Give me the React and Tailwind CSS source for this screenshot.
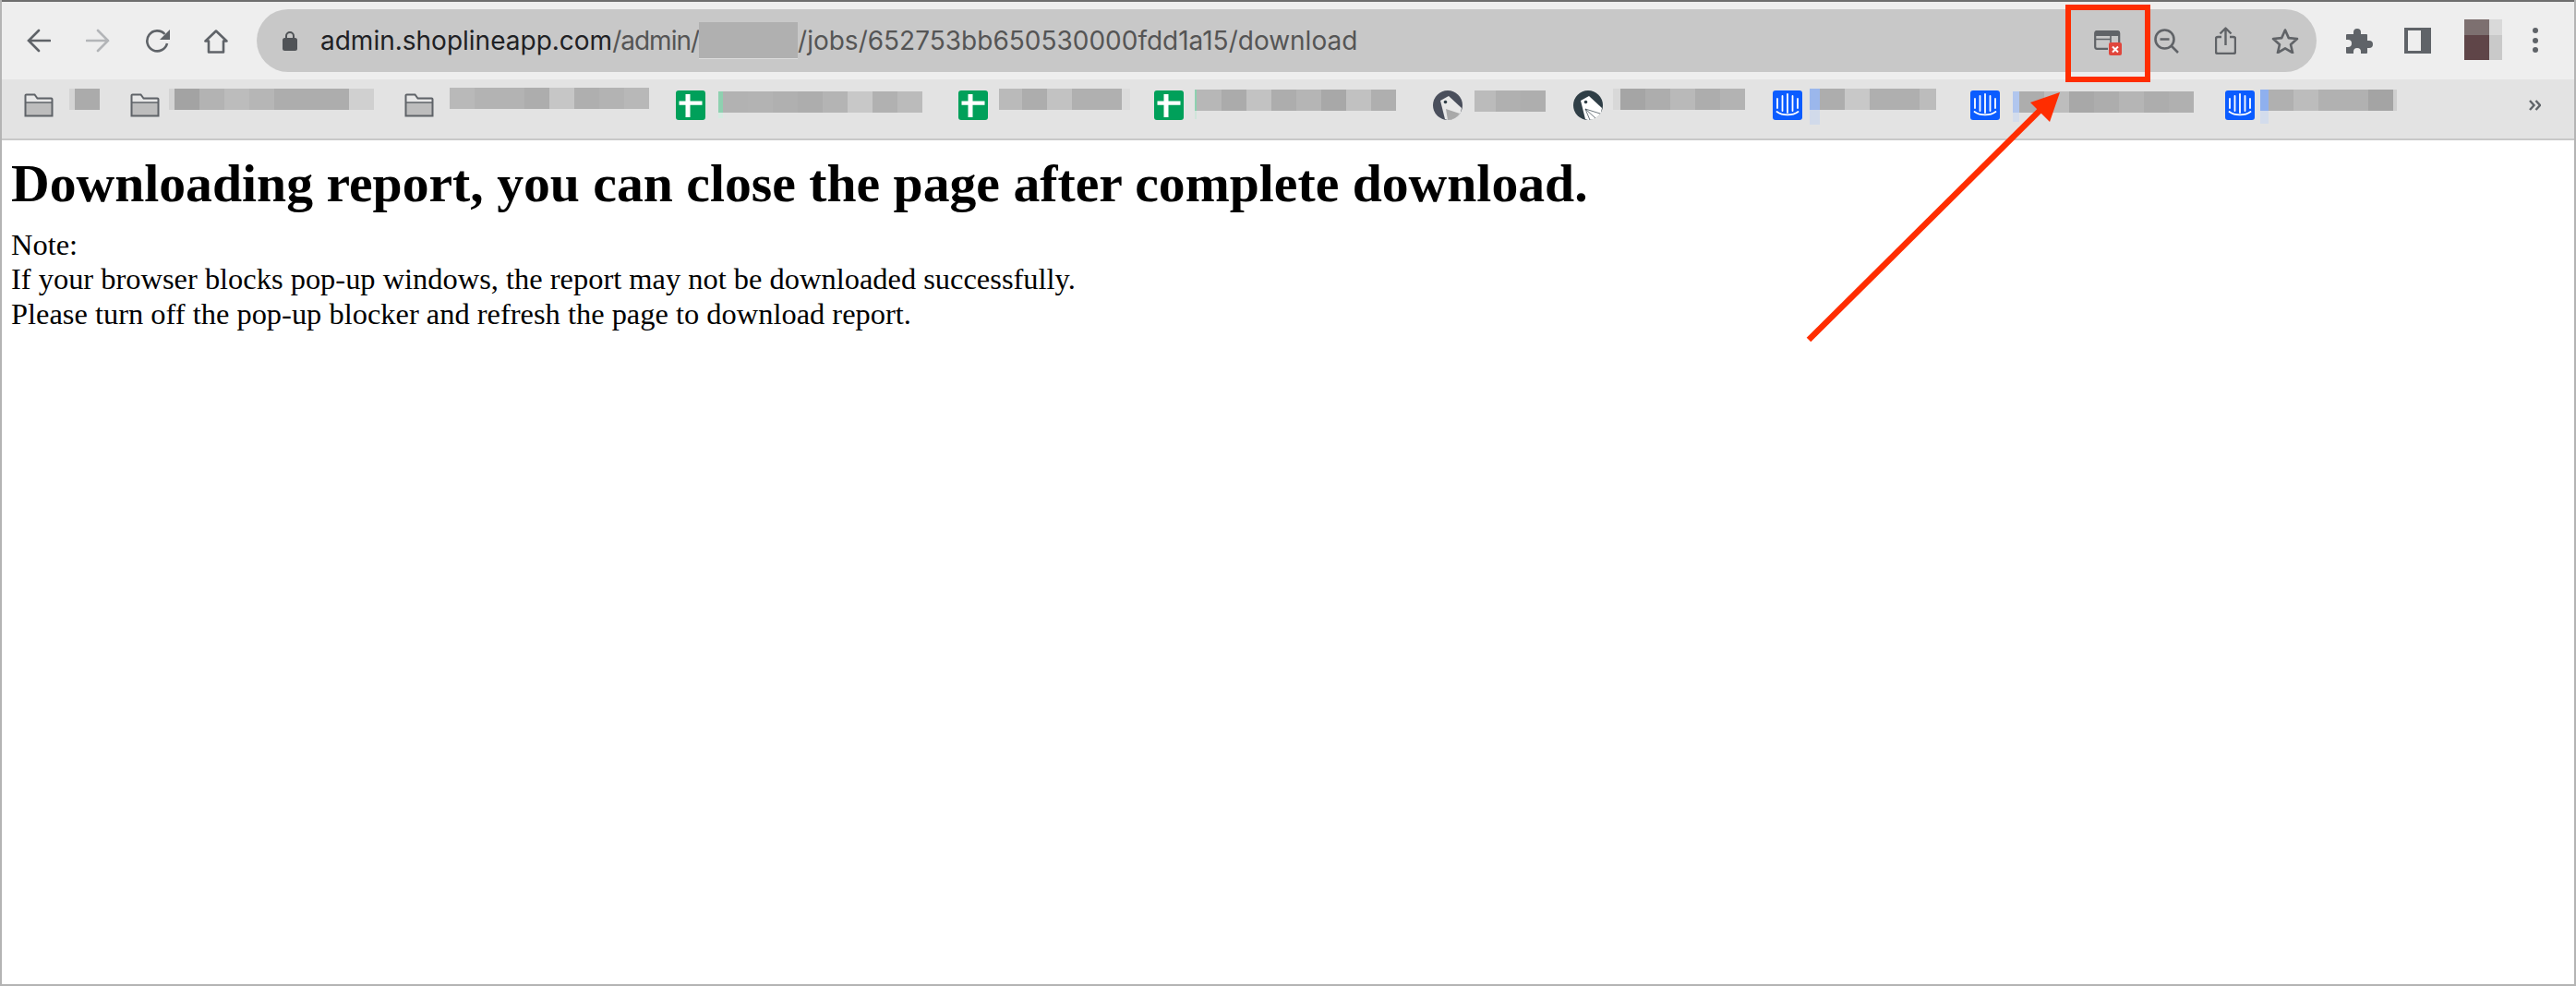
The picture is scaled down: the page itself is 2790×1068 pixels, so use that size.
import React from "react";

const RED = "#ff2d00";

// blurred-out bookmark titles, each cell is [width, colour]
// tail is the paler strip some titles leave under the first cell
const Mosaic = ({ cells, className = "", tail }) => (
  <div className={`flex flex-col ${className}`}>
    <div className="flex h-[23px]">
      {cells.map(([w, c], i) => (
        <div key={i} className="h-full" style={{ width: w, backgroundColor: c }} />
      ))}
    </div>
    {tail && <div style={{ width: tail[0], height: tail[1], backgroundColor: tail[2] }} />}
  </div>
);

const FolderIcon = () => (
  <svg width="32" height="26" viewBox="0 0 32 26" className="shrink-0 mt-[9px]">
    <path d="M1.5 24.5V2.5a1 1 0 0 1 1-1h9l3 4h15a1 1 0 0 1 1 1v18z" fill="#bdbdbd" />
    <path d="M2 2h9.5l3 4.5H30V10H2z" fill="#e8e8e8" />
    <path d="M1.5 10h29" stroke="#5f6368" strokeWidth="1.5" />
    <path d="M1.5 24.5V2.5a1 1 0 0 1 1-1h9l3 4h15a1 1 0 0 1 1 1v18z" fill="none" stroke="#5f6368" strokeWidth="2" />
  </svg>
);

const SheetsIcon = () => (
  <svg width="32" height="32" viewBox="0 0 32 32" className="shrink-0 mt-[6px]">
    <rect width="32" height="32" rx="3" fill="#00a05a" />
    <path d="M3.5 11.5h25v4.2h-25zM10.5 4h5v25h-5z" fill="#fff" />
  </svg>
);

const TagIcon = ({ soft }) => (
  <svg width="32" height="32" viewBox="0 0 32 32" className="shrink-0 mt-[6px]">
    <circle cx="16" cy="16" r="16" fill={soft ? "#4a4f5c" : "#2f3e46"} />
    <path d="M8 11L17 6L31 19L30 24A16 16 0 0 1 16 32L13 31z" fill={soft ? "#e8e8e8" : "#fff"} />
    <circle cx="13.5" cy="12.5" r="1.8" fill="#2f3e46" />
    {!soft && <path d="M13 20L18 32M13 20L24 30M13 20L29 25" stroke="#2f3e46" strokeWidth="0.7" />}
    {soft && <path d="M14 20L29 25A16 16 0 0 1 16 32z" fill="#a9a9a9" />}
  </svg>
);

const IntercomIcon = () => (
  <svg width="32" height="32" viewBox="0 0 32 32" className="shrink-0 mt-[6px]">
    <rect width="32" height="32" rx="3" fill="#0b5cff" />
    <path
      d="M5 9v10M10.5 6v16M16 4v20M21.5 6v16M27 9v10"
      stroke="#fff"
      strokeWidth="1.8"
      strokeLinecap="round"
      fill="none"
    />
    <path d="M4.5 23c6 4.5 17 4.5 23 0" stroke="#fff" strokeWidth="1.8" strokeLinecap="round" fill="none" />
  </svg>
);

const g = ["#ababab", "#b3b3b3", "#bcbcbc", "#b0b0b0", "#c9c9c9"];

const App = () => {
  return (
    <div className="relative h-[1068px] w-[2790px] overflow-hidden border-x-2 border-b-2 border-[#b4b4b4] bg-white">
      {/* top chrome */}
      <div className="h-[2px] bg-[#6e6e6e] -mx-[2px]" />

      {/* toolbar */}
      <div className="flex h-[84px] items-start bg-[#eeeeee]">
        <svg width="26" height="26" viewBox="0 0 26 26" className="ml-[27px] mt-[29px] shrink-0" fill="none" stroke="#5f6368" strokeWidth="2.6" strokeLinecap="round">
          <path d="M25 13H2M13 2L2 13l11 11" />
        </svg>
        <svg width="26" height="26" viewBox="0 0 26 26" className="ml-[38px] mt-[29px] shrink-0" fill="none" stroke="#b3b5b8" strokeWidth="2.6" strokeLinecap="round">
          <path d="M1 13h23M13 2l11 11-11 11" />
        </svg>
        <svg width="28" height="26" viewBox="0 0 28 26" className="ml-[38px] mt-[29px] shrink-0" fill="none">
          <path d="M24 16a11 11 0 1 1-2.5-10" stroke="#5f6368" strokeWidth="2.6" />
          <path d="M27 1v11H16z" fill="#5f6368" />
        </svg>
        <svg width="26" height="26" viewBox="0 0 26 26" className="ml-[36px] mt-[30px] shrink-0" fill="none" stroke="#5f6368" strokeWidth="2.6" strokeLinejoin="round">
          <path d="M13 1.5L1.5 12.5h3.5v12h16v-12h3.5z" />
        </svg>

        {/* address pill */}
        <div className="ml-[31px] mt-[8px] flex h-[68px] w-[2231px] shrink-0 items-center rounded-full bg-[#c8c8c8]">
          <svg width="16" height="22" viewBox="0 0 16 22" className="ml-[28px] shrink-0">
            <path d="M4 9V6a4 4 0 0 1 8 0v3" fill="none" stroke="#505357" strokeWidth="2" />
            <rect y="8" width="16" height="14" rx="2.5" fill="#505357" />
          </svg>
          <div className="ml-[25px] flex h-full items-center whitespace-nowrap font-['Inter',sans-serif] text-[28px] text-[#555555]">
            <span className="text-[#202124]">admin.shoplineapp.com</span>
            <span className="tracking-[-1px]">/admin/</span>
            <div className="h-[40px] w-[107px] shrink-0 border-b border-[#dcdcdc] bg-[#b0b0b0]" />
            <span>/jobs/652753bb650530000fdd1a15/download</span>
          </div>

          <div className="ml-auto mr-[19px] flex items-center">
            {/* popup blocked */}
            <svg width="30" height="27" viewBox="0 0 30 27" className="relative top-[2.5px] shrink-0" fill="none">
              <path d="M1.2 3a2 2 0 0 1 2-2h22a2 2 0 0 1 2 2v10M15 19.8H3.2a2 2 0 0 1-2-2V3" stroke="#606367" strokeWidth="2.2" />
              <path d="M1 1h27v5H1z" fill="#606367" />
              <path d="M1.2 9.5h16M18 5v8" stroke="#606367" strokeWidth="1.6" />
              <rect x="16" y="13" width="14" height="14" rx="2" fill="#e0463c" />
              <path d="M20 17.5l6 6M26 17.5l-6 6" stroke="#fff" strokeWidth="2" />
            </svg>
            <svg width="27" height="27" viewBox="0 0 27 27" className="ml-[35px] shrink-0" fill="none" stroke="#606367" strokeWidth="2.6">
              <circle cx="11.5" cy="11.5" r="10" />
              <path d="M6.5 11.5h10M18.5 18.5l7.5 7.5" />
            </svg>
            <svg width="23" height="30" viewBox="0 0 23 30" className="ml-[39px] shrink-0" fill="none" stroke="#606367" strokeWidth="2.4" strokeLinejoin="round">
              <path d="M7 11H3a2 2 0 0 0-2 2v14a2 2 0 0 0 2 2h17a2 2 0 0 0 2-2V13a2 2 0 0 0-2-2h-4M11.5 20V2M5.5 7.5l6-6 6 6" />
            </svg>
            <svg width="30" height="28" viewBox="0 0 30 28" className="ml-[38px] shrink-0" fill="none" stroke="#606367" strokeWidth="2.6" strokeLinejoin="round">
              <path d="M15 2.5l3.8 8.6 9.2.9-7 6.2 2.1 9-8.1-4.8-8.1 4.8 2.1-9-7-6.2 9.2-.9z" />
            </svg>
          </div>
        </div>

        {/* extensions etc */}
        <svg width="30" height="28" viewBox="0 0 30 28" className="ml-[31px] mt-[28px] shrink-0" fill="#5f6368">
          <path d="M2 7h7V5a4 4 0 0 1 8 0v2h6a1 1 0 0 1 1 1v6h2a4 4 0 0 1 0 8h-2v5a1 1 0 0 1-1 1h-6v-2a4 4 0 0 0-8 0v2H2a1 1 0 0 1-1-1v-6h2a4 4 0 0 0 0-8H1V8a1 1 0 0 1 1-1z" />
        </svg>
        <div className="ml-[34px] mt-[28px] h-[28px] w-[29px] shrink-0 border-y-[3px] border-l-[4px] border-r-[11px] border-[#5f6368]" />
        <div className="ml-[36px] mt-[19px] grid h-[44px] w-[41px] shrink-0 grid-cols-[27px_14px] grid-rows-[17px_27px]">
          <div className="bg-[#7d7070]" />
          <div className="bg-[#d9d9d9]" />
          <div className="bg-[#5f4548]" />
          <div className="bg-[#c9c9c9]" />
        </div>
        <div className="ml-[33px] mt-[28px] flex shrink-0 flex-col gap-[4.5px]">
          <div className="h-[6px] w-[6px] rounded-full bg-[#5f6368]" />
          <div className="h-[6px] w-[6px] rounded-full bg-[#5f6368]" />
          <div className="h-[6px] w-[6px] rounded-full bg-[#5f6368]" />
        </div>
      </div>

      {/* bookmarks bar */}
      <div className="flex h-[66px] items-start border-b-2 border-[#c8c8c8] bg-[#e3e3e3] pt-[6px]">
        <div className="ml-[24px]"><FolderIcon /></div>
        <Mosaic className="ml-[17px] mt-[4px]" cells={[[6, "#d4d4d4"], [27, g[0]]]} />

        <div className="ml-[33px]"><FolderIcon /></div>
        <Mosaic className="ml-[10px] mt-[4px]" cells={[[6, "#d4d4d4"], [27, "#a3a3a3"], [27, g[1]], [27, g[2]], [27, "#b6b6b6"], [81, "#adadad"], [27, "#d0d0d0"]]} />

        <div className="ml-[33px]"><FolderIcon /></div>
        <Mosaic className="ml-[17px] mt-[3px]" cells={[[27, "#b9b9b9"], [54, "#b3b3b3"], [27, "#adadad"], [27, "#c6c6c6"], [27, "#afafaf"], [27, "#b3b3b3"], [27, "#b8b8b8"]]} />

        <div className="ml-[29px]"><SheetsIcon /></div>
        <Mosaic className="ml-[14px] mt-[7px]" tail={[5, 6, "#d5ebe1"]} cells={[[5, "#8ed1b0"], [27, "#b2b2b2"], [27, "#b3b3b3"], [27, "#b0b0b0"], [27, "#adadad"], [27, "#b4b4b4"], [27, "#c8c8c8"], [27, "#b1b1b1"], [27, "#bbbbbb"]]} />

        <div className="ml-[39px]"><SheetsIcon /></div>
        <Mosaic className="ml-[12px] mt-[4px]" cells={[[25, "#bababa"], [27, "#adadad"], [27, "#c2c2c2"], [54, "#b0b0b0"], [9, "#dcdcdc"]]} />

        <div className="ml-[26px]"><SheetsIcon /></div>
        <Mosaic className="ml-[12px] mt-[5px]" tail={[2, 9, "#cfe5da"]} cells={[[2, "#8ed1b0"], [27, "#b7b7b7"], [27, "#ababab"], [27, "#c2c2c2"], [27, "#adadad"], [27, "#b5b5b5"], [27, "#a8a8a8"], [27, "#c1c1c1"], [27, "#afafaf"]]} />

        <div className="ml-[40px]"><TagIcon soft /></div>
        <Mosaic className="ml-[13px] mt-[6px]" cells={[[23, "#bbbbbb"], [27, "#b0b0b0"], [27, "#aeaeae"]]} />

        <div className="ml-[30px]"><TagIcon /></div>
        <Mosaic className="ml-[11px] mt-[4px]" cells={[[8, "#d8d8d8"], [27, "#a5a5a5"], [27, "#adadad"], [27, "#b9b9b9"], [27, "#adadad"], [27, "#b3b3b3"]]} />

        <div className="ml-[30px]"><IntercomIcon /></div>
        <Mosaic className="ml-[8px] mt-[4px]" tail={[11, 16, "#d1daea"]} cells={[[11, "#9bb7ec"], [27, "#adadad"], [27, "#c8c8c8"], [54, "#afafaf"], [18, "#bcbcbc"]]} />

        <div className="ml-[37px]"><IntercomIcon /></div>
        <Mosaic className="ml-[14px] mt-[7px]" tail={[7, 10, "#d3dcec"]} cells={[[7, "#b1c6ee"], [27, "#adadad"], [27, "#bdbdbd"], [27, "#a8a8a8"], [27, "#adadad"], [27, "#b5b5b5"], [27, "#adadad"], [27, "#b0b0b0"]]} />

        <div className="ml-[34px]"><IntercomIcon /></div>
        <Mosaic className="ml-[6px] mt-[5px]" tail={[9, 14, "#d3dcec"]} cells={[[9, "#8fb0ee"], [27, "#b0b0b0"], [27, "#bcbcbc"], [54, "#b1b1b1"], [27, "#a4a4a4"], [4, "#cfcfcf"]]} />

        <svg width="13" height="12" viewBox="0 0 13 12" className="ml-[143px] mt-[16px] shrink-0" fill="none" stroke="#5f6368" strokeWidth="2.4">
          <path d="M1 1l4.5 5L1 11M7.5 1L12 6l-4.5 5" />
        </svg>
      </div>

      {/* page body */}
      <div className="pl-[10px] pt-[14px] font-['Liberation_Serif',serif] text-[32.45px] leading-[37.4px] text-black">
        <h1 className="mb-[15px] text-[57.7px] font-bold leading-[66px]">
          Downloading report, you can close the page after complete download.
        </h1>
        <p>Note:</p>
        <p>If your browser blocks pop-up windows, the report may not be downloaded successfully.</p>
        <p>Please turn off the pop-up blocker and refresh the page to download report.</p>
      </div>

      {/* annotation: red box + arrow over the screenshot */}
      <div className="absolute left-[2235px] top-[5px] h-[84px] w-[92px] border-[6px] border-[#ff2d00]" />
      <svg className="absolute -left-[2px] top-0" width="2790" height="1068" fill="none">
        <path d="M1959 368L2218 111" stroke={RED} strokeWidth="6.5" />
        <path d="M2231 100L2199 111L2220 132z" fill={RED} />
      </svg>
    </div>
  );
};

export default App;
